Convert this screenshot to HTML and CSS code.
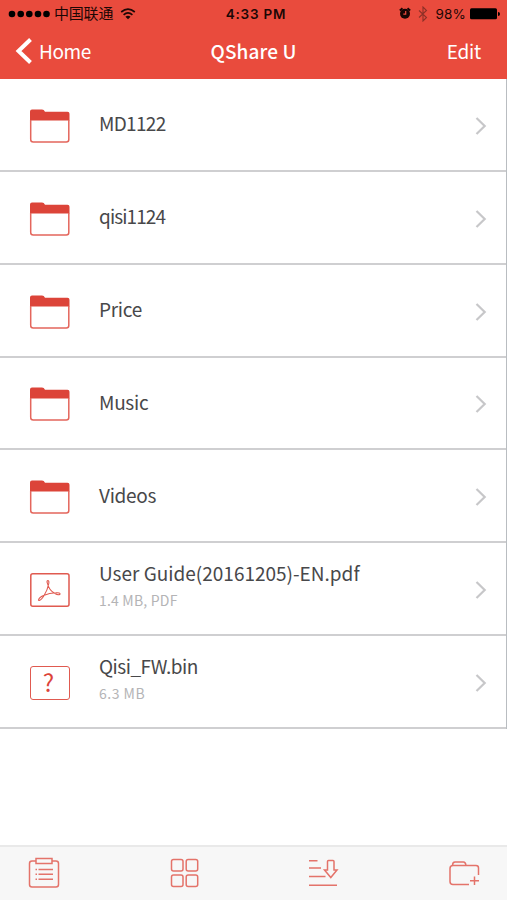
FILE: index.html
```
<!DOCTYPE html>
<html lang="en">
<head>
    <meta charset="UTF-8">
    <meta name="viewport" content="width=device-width, initial-scale=1.0">
    <title>QShare U</title>
    <link rel="stylesheet" href="styles.css">
</head>
<body>
    <svg class="symbols" width="0" height="0">
        <symbol id="folder" viewBox="0 0 42 36">
            <path d="M1 12.500V3.500Q1 1.500 3 1.500H13Q15 1.500 16 3.800H38.500Q40.500 3.800 40.500 5.800V12.500Z" fill="#dc4439"/>
            <path d="M1.700 12V31.500Q1.700 34 4.200 34H37.300Q39.800 34 39.800 31.500V12" fill="none" stroke="#e4665c" stroke-width="1.500"/>
        </symbol>
        <symbol id="arrow" viewBox="0 0 12 20">
            <path d="M1.500 2L9.700 10L1.500 18" fill="none" stroke="#c7c7c9" stroke-width="2.200"/>
        </symbol>
    </svg>

    <header class="header">
        <div class="status-bar">
            <div class="status-left">
                <svg width="42" height="8" viewBox="0 0 42 8"><circle cx="4" cy="4" r="3.300"/><circle cx="12.700" cy="4" r="3.300"/><circle cx="21.300" cy="4" r="3.300"/><circle cx="30" cy="4" r="3.300"/><circle cx="38.500" cy="4" r="3.300"/></svg>
                <span class="carrier">中国联通</span>
                <svg width="16" height="12" viewBox="0 0 16 12"><path d="M1.200 4Q8-1.600 14.800 4M3.600 6.800Q8 3 12.400 6.800" fill="none" stroke="#1c0705" stroke-width="1.700"/><path d="M5.400 8.700Q8 6.600 10.600 8.700L8 11.300Z" fill="#1c0705"/></svg>
            </div>
            <span class="clock">4:33 PM</span>
            <div class="status-right">
                <svg width="12" height="13" viewBox="0 0 12 13"><circle cx="6" cy="6.800" r="5" fill="#160504"/><path d="M.8 3.500L3.500 1.200M11.200 3.500L8.500 1.200" stroke="#160504" stroke-width="1.800"/><path d="M6.700 4V7.200H4.300" fill="none" stroke="#e94b3d" stroke-width="1.200"/></svg>
                <svg class="bluetooth" width="10" height="16" viewBox="0 0 10 16"><path d="M1 4.500L8.500 11.500L5 15V1L8.500 4.500L1 11.500" fill="none" stroke="#8d3027" stroke-width="1.100"/></svg>
                <span class="percent">98%</span>
                <svg width="30" height="12" viewBox="0 0 30 12"><rect width="27" height="11" y=".2" rx="1.500"/><path d="M28 4Q30 4 30 6T28 8Z"/></svg>
            </div>
        </div>
        <nav class="nav-bar">
            <div class="back">
                <svg width="17" height="28" viewBox="0 0 17 28"><path d="M15.500 2.500L3.500 14L15.500 25.500" fill="none" stroke="#fff" stroke-width="4"/></svg>
                <span class="home">Home</span>
            </div>
            <h1>QShare U</h1>
            <span class="edit">Edit</span>
        </nav>
    </header>

    <main class="file-list">
        <div class="row">
            <svg class="icon"><use href="#folder"/></svg>
            <div class="info"><p class="name md">MD1122</p></div>
            <svg class="arrow"><use href="#arrow"/></svg>
        </div>
        <div class="row">
            <svg class="icon"><use href="#folder"/></svg>
            <div class="info"><p class="name qisi">qisi1124</p></div>
            <svg class="arrow"><use href="#arrow"/></svg>
        </div>
        <div class="row">
            <svg class="icon"><use href="#folder"/></svg>
            <div class="info"><p class="name short">Price</p></div>
            <svg class="arrow"><use href="#arrow"/></svg>
        </div>
        <div class="row">
            <svg class="icon"><use href="#folder"/></svg>
            <div class="info"><p class="name short">Music</p></div>
            <svg class="arrow"><use href="#arrow"/></svg>
        </div>
        <div class="row">
            <svg class="icon"><use href="#folder"/></svg>
            <div class="info"><p class="name short">Videos</p></div>
            <svg class="arrow"><use href="#arrow"/></svg>
        </div>
        <div class="row">
            <svg class="icon" viewBox="0 0 42 36" fill="none" stroke="#e05a50">
                <rect x="1.800" y="1.800" width="38.200" height="32.400" rx="2" stroke-width="1.500"/>
                <path d="M19 8.500Q17.500 8.500 18.300 11Q20 18.500 26 21.500Q29 23.500 31 22.200Q31.500 20.500 27 20.800Q20.500 21 14.500 23.500Q10 25.500 9.500 28Q11 29.500 14.500 24.500Q18.500 18.500 19.800 11.500Q20.200 8.800 19 8.500Z" stroke-width="1.100"/>
            </svg>
            <div class="info">
                <p class="name guide">User Guide(20161205)-EN.pdf</p>
                <p class="detail pdf">1.4 MB, PDF</p>
            </div>
            <svg class="arrow"><use href="#arrow"/></svg>
        </div>
        <div class="row">
            <div class="unknown">?</div>
            <div class="info">
                <p class="name bin">Qisi_FW.bin</p>
                <p class="detail size">6.3 MB</p>
            </div>
            <svg class="arrow"><use href="#arrow"/></svg>
        </div>
    </main>

    <footer class="toolbar">
        <svg width="32" height="32" viewBox="0 0 32 32">
            <path d="M8 4H4Q1.500 4 1.500 6.500V27.500Q1.500 30 4 30H28Q30.500 30 30.500 27.500V6.500Q30.500 4 28 4H24"/>
            <path d="M8 1.500H24V6.500H8ZM10.500 12.500H25M10.500 17.300H25M10.500 22.200H25M7.500 12.500H9M7.500 17.300H9M7.500 22.200H9"/>
        </svg>
        <svg width="30" height="32" viewBox="0 0 30 32">
            <rect x="1.500" y="2.500" width="11.500" height="11.500" rx="2"/>
            <rect x="16.200" y="2.500" width="11.500" height="11.500" rx="2"/>
            <rect x="1.500" y="18" width="11.500" height="11.500" rx="2"/>
            <rect x="16.200" y="18" width="11.500" height="11.500" rx="2"/>
        </svg>
        <svg width="30" height="32" viewBox="0 0 30 32">
            <path d="M0 3.700H8.500M0 11H12M0 19.500H16.500M0 28.300H28"/>
            <path d="M18.500 13V4.500Q18.500 3.500 19.500 3.500H24Q25 3.500 25 4.500V13H28L21.800 20.500L15.500 13Z"/>
        </svg>
        <svg width="32" height="32" viewBox="0 0 32 32">
            <path d="M20 27.500H4Q1 27.500 1 24.500V11.500Q1 8.500 4 8.500H27Q29.500 8.500 29.500 11V18M3.500 8.500Q3.500 5 6 5H14.500Q16.500 5 17 8.500M25.500 19.500V28M21 23.800H30"/>
        </svg>
    </footer>
</body>
</html>
```
FILE: styles.css
```
* {
    box-sizing: border-box;
}

body {
    font-family: 'Noto Sans CJK SC', sans-serif;
    background: #fff;
    color: #48484a;
    display: flex;
    flex-direction: column;
    height: 900px;
    margin: 0;
    overflow: hidden;
}

h1, p {
    margin: 0;
}

svg {
    display: block;
    flex-shrink: 0;
}

.symbols {
    position: absolute;
}

.header {
    background: #e94b3d;
    height: 79px;
}

.status-bar {
    display: grid;
    grid-template-columns: 1fr auto 1fr;
    align-items: center;
    height: 27px;
    padding: 0 7px 0 8px;
    color: #1c0705;
    font-family: Inter, sans-serif;
    font-size: 13.5px;
}

.status-left, .status-right {
    display: flex;
    align-items: center;
}

.status-right {
    justify-content: flex-end;
}

.carrier {
    font-family: 'Noto Sans CJK SC', sans-serif;
    font-size: 15px;
    line-height: 20px;
    letter-spacing: -0.2px;
    margin: -2px 7px 0 4px;
}

.clock {
    font-weight: 600;
    letter-spacing: 0.8px;
    margin-left: 4px;
}

.bluetooth {
    margin: 0 7px 0 7px;
}

.percent {
    margin-right: 4px;
    letter-spacing: 0.2px;
}

.nav-bar {
    display: grid;
    grid-template-columns: 1fr auto 1fr;
    align-items: center;
    height: 48px;
    padding: 0 15px;
    color: #fff;
    font-size: 19px;
    line-height: 28px;
}

.back {
    display: flex;
    align-items: center;
    gap: 7px;
}

.home {
    letter-spacing: -0.4px;
}

.nav-bar h1 {
    font-size: 19px;
    font-weight: 500;
    letter-spacing: 0.1px;
}

.edit {
    text-align: right;
    letter-spacing: -0.2px;
    padding-right: 11px;
}

.file-list {
    border-right: 1px solid #b9bdc1;
    height: 650px;
}

.row {
    display: flex;
    align-items: center;
    height: 92.85px;
    border-bottom: 2px solid #cfcfd1;
    padding: 3px 19px 0 29px;
}

.icon {
    width: 42px;
    height: 36px;
}

.info {
    flex: 1;
    margin-left: 28px;
}

.name {
    font-size: 19px;
    line-height: 28px;
    margin-top: -5px;
}

.md {
    letter-spacing: -0.7px;
}

.qisi {
    letter-spacing: -0.9px;
}

.short {
    letter-spacing: -0.3px;
}

.bin {
    letter-spacing: -0.5px;
}

.detail {
    color: #b4b4b6;
    font-size: 14px;
    line-height: 20px;
    margin: 3px 0 6px;
}

.pdf {
    letter-spacing: 0.2px;
}

.size {
    letter-spacing: 0.5px;
}

.arrow {
    width: 12px;
    height: 20px;
}

.unknown {
    width: 40px;
    height: 34px;
    margin: 0 1px;
    border: 1.5px solid #e05a50;
    border-radius: 3px;
    color: #dc4439;
    font-size: 24px;
    line-height: 30px;
    padding-right: 3px;
    text-align: center;
}

.toolbar {
    display: flex;
    justify-content: space-between;
    align-items: center;
    margin-top: auto;
    height: 55px;
    padding: 0 26px 2px 28px;
    background: #f7f7f7;
    border-top: 2px solid #e9e9e9;
}

.toolbar svg {
    fill: none;
    stroke: #e4736a;
    stroke-width: 1.5;
}
```
